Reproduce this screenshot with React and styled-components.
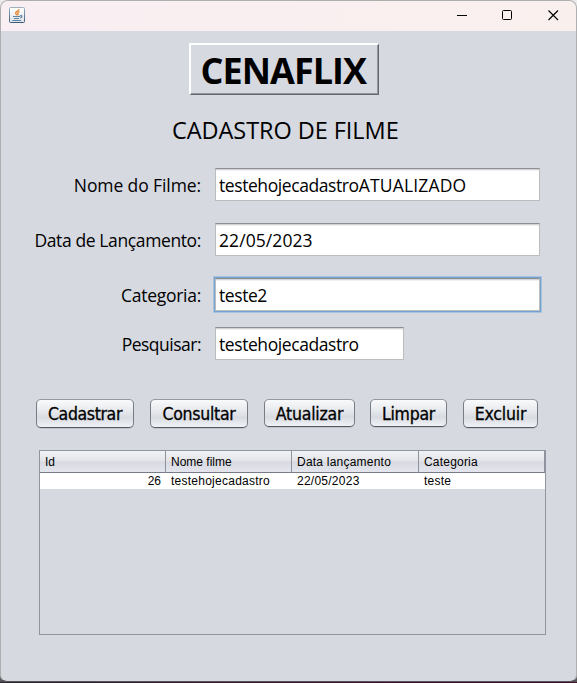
import React from "react";
import styled, { createGlobalStyle } from "styled-components";

const Global = createGlobalStyle`
  * { box-sizing: border-box; }
  html, body { margin: 0; padding: 0; background: #2a2029; }
`;

const ui = `"Open Sans", "Noto Sans", sans-serif`;

const Screen = styled.div`
  width: 577px;
  height: 683px;
  overflow: hidden;
  padding-bottom: 1px;
  background: linear-gradient(90deg, #2b2830, #43102b 70%, #43102b);
`;

const Backdrop = styled.div`
  height: 682px;
  background: linear-gradient(#ececec 0 20px, #aaa 20px 660px, #555 680px);
`;

const Window = styled.main`
  width: 577px;
  height: 682px;
  display: flex;
  flex-direction: column;
  border: 1px solid #afafb1;
  border-bottom-color: #55525a;
  border-radius: 8px 8px 7px 7px;
  overflow: hidden;
  background: #d6d9e0;
  color: #000;
  font-family: ${ui};
`;

const TitleBar = styled.header`
  height: 30px;
  flex: none;
  display: flex;
  align-items: center;
  justify-content: space-between;
  padding: 0 0 2px 8px;
  background: linear-gradient(90deg, #f9eef2, #f9f0ee);
`;

const Controls = styled.div`
  display: flex;
`;

const Control = styled.button`
  width: 45.5px;
  height: 28px;
  display: grid;
  place-items: center;
  padding: 0;
  border: 0;
  background: none;
`;

const Content = styled.section`
  flex: 1;
  display: flex;
  flex-direction: column;
  padding-top: 12px;
`;

const Brand = styled.h1`
  width: 190px;
  height: 52px;
  margin: 0 0 0 188px;
  border-style: solid;
  border-width: 2px 1px 1px 2px;
  border-color: #fff #66686d #66686d #fff;
  box-shadow: inset -1px -1px 0 #94969b;
  padding-left: 9.5px;
  font-size: 36px;
  font-weight: 700;
  line-height: 52px;
  letter-spacing: ${(p) => p.$track}px;
  white-space: nowrap;
`;

const Subtitle = styled.h2`
  height: 32px;
  margin: 19px 0 22px 171px;
  font-size: 23.5px;
  font-weight: 400;
  line-height: 33px;
  letter-spacing: ${(p) => p.$track}px;
  white-space: nowrap;
`;

const FieldRow = styled.div`
  display: flex;
  height: 33px;
  margin-bottom: ${(p) => p.$gap}px;
`;

const Label = styled.div`
  width: 200px;
  margin-right: 14px;
  text-align: right;
  font-size: 17.5px;
  line-height: 34px;
  letter-spacing: ${(p) => p.$track}px;
  white-space: nowrap;
`;

const Field = styled.div`
  width: ${(p) => p.$width}px;
  height: 33px;
  padding: 0 3px;
  border: 1px solid #bcbcbe;
  border-top-color: #8d8e93;
  background: linear-gradient(#d4d4d6 0 1px, #f1f1f2 1px 2px, #fff 2px);
  box-shadow: ${(p) => (p.$focused ? "0 0 0 1px #73a4d1, 0 0 0 2px #a9c3df" : "none")};
  font-size: 17.5px;
  line-height: 32px;
  white-space: nowrap;
  outline: 0;
`;

const Run = styled.span`
  letter-spacing: ${(p) => p.$track}px;
`;

const Actions = styled.div`
  display: flex;
  align-items: flex-start;
  height: 29px;
  padding-left: 35px;
`;

const Action = styled.button`
  width: ${(p) => p.$width}px;
  height: ${(p) => p.$height}px;
  margin-right: ${(p) => p.$gap}px;
  padding: ${(p) => (p.$height === 28 ? "1px 0 0" : "0")};
  border: 1px solid #777b84;
  border-color: #9599a1 #787c84 #54575e;
  border-radius: 5px;
  background: linear-gradient(#f9fafb 0%, #e7e9ed 40%, #d8dbe1 65%, #f0f2f6 100%);
  box-shadow: 0 1px 0 #c2c5cc;
  color: #000;
  font: 17.5px/26px "DejaVu Sans Condensed", "DejaVu Sans", sans-serif;
  font-stretch: condensed;
  letter-spacing: ${(p) => p.$track}px;
  -webkit-text-stroke: 0.3px #000;
  white-space: nowrap;
`;

const TablePane = styled.div`
  width: 507px;
  height: 185px;
  margin: 22px 0 0 38px;
  border: 1px solid #9195a0;
`;

const Table = styled.table`
  width: 505px;
  table-layout: fixed;
  border-collapse: separate;
  border-spacing: 0;
  font: 12px/16px "Liberation Sans", Arial, sans-serif;
`;

const HeadCell = styled.th`
  height: 22px;
  padding: 0 5px;
  border-right: 1px solid #8e929d;
  border-bottom: 1px solid #787c88;
  background: linear-gradient(#f2f3f5 0%, #e3e5e9 45%, #d8dae1 55%, #e4e5ee 100%);
  text-align: left;
  font-weight: 400;
  letter-spacing: ${(p) => p.$track || 0}px;
`;

const Cell = styled.td`
  height: 16px;
  padding: 1px 5px 0;
  line-height: 15px;
  background: #fff;
  text-align: ${(p) => (p.$numeric ? "right" : "left")};
  letter-spacing: ${(p) => (p.$numeric ? 0 : 0.25)}px;
`;

const JavaIcon = () => (
  <svg width="16" height="16" viewBox="0 0 16 16" fill="none">
    <defs>
      <linearGradient id="tile" x1="0" y1="0" x2="0" y2="1">
        <stop offset="0" stopColor="#fff" />
        <stop offset="1" stopColor="#dce2e8" />
      </linearGradient>
      <linearGradient id="edge" x1="0" y1="0" x2="0" y2="1">
        <stop offset="0" stopColor="#a0b0bf" />
        <stop offset="1" stopColor="#3b5d79" />
      </linearGradient>
    </defs>
    <rect x=".5" y=".5" width="15" height="15" rx="1" fill="url(#tile)" stroke="url(#edge)" />
    <path d="M10.3 2.2C9.8 4 6.4 4.3 6.6 6c.1 1 1 1.300 1.300 2.300M10.600 4.500C8.500 5.300 8.400 6 9 6.700c.3.5.1 1.100-.5 1.600" stroke="#e58632" strokeWidth="1.300" />
    <path d="M4 9.500h7.200M5 11.500h5M11 8.800c2.500-.9 2.500 1.500.2 2.200M3.500 13.500h8.500" stroke="#5c84a2" strokeWidth="1.150" />
  </svg>
);

const fields = [
  {
    label: "Nome do Filme:",
    runs: [["testehojecadastro", -0.42], ["ATUALIZADO", 0.18]],
    width: 325,
    gap: 22,
    track: -0.1,
  },
  { label: "Data de Lançamento:", runs: [["22/05/2023", 0.08]], width: 325, gap: 22, track: -0.38 },
  { label: "Categoria:", runs: [["teste2", -0.42]], width: 325, gap: 16, track: -0.27, focused: true },
  { label: "Pesquisar:", runs: [["testehojecadastro", -0.42]], width: 189, gap: 39, track: -0.5 },
];

const actions = [
  { text: "Cadastrar", width: 98, height: 29, gap: 16, track: -0.35 },
  { text: "Consultar", width: 98, height: 29, gap: 16, track: -0.25 },
  { text: "Atualizar", width: 91, height: 28, gap: 15, track: -0.2 },
  { text: "Limpar", width: 77, height: 28, gap: 16, track: -0.25 },
  { text: "Excluir", width: 75, height: 29, gap: 0, track: -0.2 },
];

export default function App() {
  return (
    <Screen>
      <Global />
      <Backdrop>
        <Window>
          <TitleBar>
            <JavaIcon />
            <Controls>
              <Control aria-label="Minimizar">
                <svg width="11" height="11"><path d="M0 5.500h10" stroke="#000" /></svg>
              </Control>
              <Control aria-label="Maximizar">
                <svg width="11" height="11"><rect x=".5" y=".5" width="9" height="9" rx="1" fill="none" stroke="#000" /></svg>
              </Control>
              <Control aria-label="Fechar">
                <svg width="11" height="11"><path d="M.5.5l9.500 9.500M10 .5L.5 10" stroke="#000" strokeWidth="1.150" /></svg>
              </Control>
            </Controls>
          </TitleBar>
          <Content>
            <Brand $track={-0.95}>CENAFLIX</Brand>
            <Subtitle $track={-0.06}>CADASTRO DE FILME</Subtitle>
            {fields.map((f) => (
              <FieldRow key={f.label} $gap={f.gap}>
                <Label $track={f.track}>{f.label}</Label>
                <Field role="textbox" aria-label={f.label} $width={f.width} $focused={f.focused}>
                  {f.runs.map(([text, track]) => (
                    <Run key={text} $track={track}>{text}</Run>
                  ))}
                </Field>
              </FieldRow>
            ))}
            <Actions>
              {actions.map((a) => (
                <Action key={a.text} $width={a.width} $height={a.height} $gap={a.gap} $track={a.track}>
                  {a.text}
                </Action>
              ))}
            </Actions>
            <TablePane>
              <Table>
                <colgroup>
                  <col width="126" />
                  <col width="126" />
                  <col width="127" />
                  <col width="126" />
                </colgroup>
                <thead>
                  <tr>
                    <HeadCell>Id</HeadCell>
                    <HeadCell>Nome filme</HeadCell>
                    <HeadCell $track={0.22}>Data lançamento</HeadCell>
                    <HeadCell $track={0.2}>Categoria</HeadCell>
                  </tr>
                </thead>
                <tbody>
                  <tr>
                    <Cell $numeric>26</Cell>
                    <Cell>testehojecadastro</Cell>
                    <Cell>22/05/2023</Cell>
                    <Cell>teste</Cell>
                  </tr>
                </tbody>
              </Table>
            </TablePane>
          </Content>
        </Window>
      </Backdrop>
    </Screen>
  );
}
